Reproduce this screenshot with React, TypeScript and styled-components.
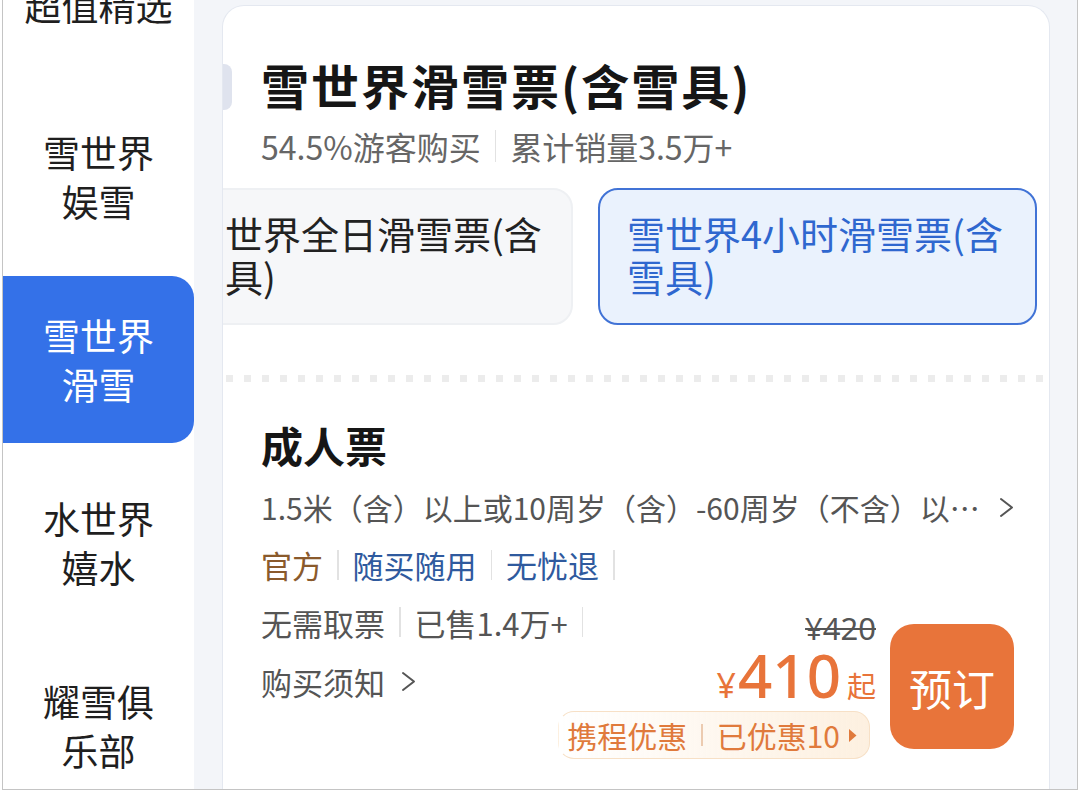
import React from 'react'
import styled, { createGlobalStyle } from 'styled-components'

const GlobalStyle = createGlobalStyle`
  html, body {
    margin: 0;
    padding: 0;
    background: #fff;
  }
  body {
    font-family: "Noto Sans CJK SC", "Noto Sans", sans-serif;
    color: #222;
  }
  * {
    box-sizing: border-box;
  }
`

const Screen = styled.div`
  display: flex;
  width: 1076px;
  height: 790px;
  margin-left: 2px;
  border: 1px solid #c4c4c4;
  border-top: none;
  background: #f3f5f9;
  overflow: hidden;
`

const Sidebar = styled.nav`
  width: 191px;
  flex-shrink: 0;
  background: #fff;
  overflow: hidden;
`

const SideList = styled.ul`
  list-style: none;
  margin: 0;
  padding: 0 0 60px;
  display: flex;
  flex-direction: column;
  gap: 16px;
`

const SideItem = styled.li<{ $active?: boolean; $compact?: boolean }>`
  height: ${(p) => (p.$compact ? 143 : 167)}px;
  flex-shrink: 0;
  display: flex;
  flex-direction: column;
  align-items: center;
  justify-content: center;
  font-size: 37px;
  line-height: 49px;
  color: ${(p) => (p.$active ? '#fff' : '#1f1f1f')};
  background: ${(p) => (p.$active ? '#3471e8' : 'transparent')};
  border-radius: 0 22px 22px 0;
`

const SideLine = styled.span`
  display: block;
  white-space: nowrap;
`

const Main = styled.main`
  flex: 1;
  min-width: 0;
  display: flex;
  padding: 5px 27px 0 28px;
`

const Card = styled.section`
  position: relative;
  flex: 1;
  min-width: 0;
  background: #fff;
  border: 1.5px solid #e4e8f0;
  border-bottom: none;
  border-radius: 22px 22px 0 0;
  overflow: hidden;
`

const EdgeTab = styled.div`
  position: absolute;
  left: 0;
  top: 58px;
  width: 9px;
  height: 46px;
  background: #dfe3ee;
  border-radius: 0 8px 8px 0;
`

const Header = styled.header`
  padding: 48px 38px 0;
`

const Title = styled.h1`
  margin: 0;
  font-size: 48px;
  line-height: 60px;
  font-weight: 700;
  color: #161616;
  letter-spacing: 2px;
`

const Stats = styled.div`
  display: flex;
  align-items: center;
  margin-top: 12px;
  font-size: 32px;
  line-height: 40px;
  color: #666;
`

const Divider = styled.span<{ $color?: string; $h?: number }>`
  display: inline-block;
  flex-shrink: 0;
  width: 1.5px;
  height: ${(p) => p.$h ?? 30}px;
  margin: 0 14px;
  background: ${(p) => p.$color ?? '#e2e2e2'};
`

const Strip = styled.div`
  margin-top: 22px;
  overflow: hidden;
`

const Track = styled.div`
  display: flex;
  gap: 25px;
  width: max-content;
  padding: 0 16px 0 16px;
`

const Tab = styled.div<{ $active?: boolean; $width: number }>`
  width: ${(p) => p.$width}px;
  height: 137px;
  padding: 21px 16px 0 27px;
  border: 2px solid ${(p) => (p.$active ? '#4173d6' : '#eef0f3')};
  border-radius: 20px;
  background: ${(p) => (p.$active ? '#eaf2fd' : '#f6f7f9')};
  color: ${(p) => (p.$active ? '#2f67cf' : '#222')};
  font-size: 38px;
  line-height: 43px;
`

const Dots = styled.div`
  height: 7px;
  margin: 50px 0 0 3px;
  background-image: linear-gradient(to right, #ececec 7px, transparent 7px);
  background-size: 18px 7px;
  background-repeat: repeat-x;
`

const Ticket = styled.div`
  padding: 35px 35px 0 38px;
`

const TicketName = styled.h2`
  margin: 0;
  font-size: 42px;
  line-height: 56px;
  font-weight: 700;
  color: #161616;
`

const DescRow = styled.div`
  display: flex;
  align-items: center;
  margin-top: 13px;
  height: 42px;
  gap: 14px;
`

const DescText = styled.span`
  flex: 1;
  min-width: 0;
  overflow: hidden;
  white-space: nowrap;
  text-overflow: ellipsis;
  font-size: 30px;
  line-height: 42px;
  color: #555;
`

const TagRow = styled.div`
  display: flex;
  align-items: center;
  margin-top: 16px;
  height: 42px;
  font-size: 31px;
`

const Tag = styled.span<{ $color: string }>`
  color: ${(p) => p.$color};
  line-height: 42px;
`

const BottomRow = styled.div`
  display: flex;
  align-items: flex-start;
  margin-top: 15px;
`

const LeftCol = styled.div`
  display: flex;
  flex-direction: column;
  flex: 1;
  min-width: 0;
  gap: 17px;
`

const InfoRow = styled.div`
  display: flex;
  align-items: center;
  height: 42px;
  font-size: 31px;
  color: #555;
  white-space: nowrap;
`

const Notice = styled.div`
  display: flex;
  align-items: center;
  gap: 16px;
  height: 42px;
  font-size: 31px;
  color: #555;
  white-space: nowrap;
`

const RightGroup = styled.div`
  display: flex;
  flex-shrink: 0;
  align-items: flex-start;
  gap: 14px;
`

const PriceCol = styled.div`
  display: flex;
  flex-direction: column;
  align-items: flex-end;
  margin-top: 9px;
`

const OldPrice = styled.span`
  font-family: "Noto Sans", sans-serif;
  font-size: 31px;
  line-height: 36px;
  color: #555;
  text-decoration: line-through;
  text-decoration-thickness: 2px;
`

const NowPrice = styled.div`
  display: flex;
  align-items: baseline;
  color: #e8743a;
  line-height: 58px;
  height: 58px;
`

const Yen = styled.span`
  font-family: "Noto Sans", sans-serif;
  font-size: 34px;
  margin-right: 2px;
`

const Amount = styled.span`
  font-family: "Noto Sans", sans-serif;
  font-size: 60px;
  font-weight: 500;
`

const From = styled.span`
  font-size: 29px;
  margin-left: 6px;
`

const Promo = styled.div`
  display: flex;
  align-items: center;
  height: 48px;
  margin: 7px 6px 0 0;
  padding: 0 12px 0 8px;
  border: 1.5px solid #f7e0c6;
  border-left-color: transparent;
  border-radius: 16px;
  background: linear-gradient(to right, rgba(255, 246, 236, 0), #fdf0e0);
  font-size: 30px;
  color: #e07a3c;
  white-space: nowrap;
`

const BookButton = styled.button`
  width: 124px;
  height: 125px;
  flex-shrink: 0;
  margin-top: 23px;
  border: none;
  border-radius: 24px;
  background: #e8743a;
  color: #fff;
  font-family: "Noto Sans CJK SC", sans-serif;
  font-size: 43px;
  cursor: pointer;
`

const Chevron = () => (
  <svg width="15" height="21" viewBox="0 0 15 21" fill="none" style={{ flexShrink: 0 }}>
    <path d="M2 2 L13 10.5 L2 19" stroke="#555" strokeWidth="2" strokeLinecap="round" strokeLinejoin="round" />
  </svg>
)

const Caret = () => (
  <svg width="9" height="15" viewBox="0 0 9 15" style={{ marginLeft: 8 }}>
    <path d="M1 1 L8.5 7.5 L1 14 Z" fill="#e07a3c" />
  </svg>
)

const sideItems = [
  { lines: ['超值精选'], compact: true },
  { lines: ['雪世界', '娱雪'] },
  { lines: ['雪世界', '滑雪'], active: true },
  { lines: ['水世界', '嬉水'] },
  { lines: ['耀雪俱', '乐部'] },
  { lines: ['周边', '酒店'] },
]

const tabs = [
  { name: '雪世界全日滑雪票(含雪具)', width: 415 },
  { name: '雪世界4小时滑雪票(含雪具)', width: 439, active: true },
]

const tags = [
  { text: '官方', color: '#8a5a2c' },
  { text: '随买随用', color: '#2f5a9e' },
  { text: '无忧退', color: '#2f5a9e' },
]

const App = (): JSX.Element => {
  return (
    <>
      <GlobalStyle />
      <Screen>
        <Sidebar ref={(el) => { if (el) el.scrollTop = 66 }}>
          <SideList>
            {sideItems.map((item, i) => (
              <SideItem key={i} $active={item.active} $compact={item.compact}>
                {item.lines.map((line) => (
                  <SideLine key={line}>{line}</SideLine>
                ))}
              </SideItem>
            ))}
          </SideList>
        </Sidebar>
        <Main>
          <Card>
            <EdgeTab />
            <Header>
              <Title>雪世界滑雪票(含雪具)</Title>
              <Stats>
                54.5%游客购买
                <Divider $h={32} />
                累计销量3.5万+
              </Stats>
            </Header>
            <Strip ref={(el) => { if (el) el.scrollLeft = 81 }}>
              <Track>
                {tabs.map((tab) => (
                  <Tab key={tab.name} $active={tab.active} $width={tab.width}>
                    {tab.name}
                  </Tab>
                ))}
              </Track>
            </Strip>
            <Dots />
            <Ticket>
              <TicketName>成人票</TicketName>
              <DescRow>
                <DescText>1.5米（含）以上或10周岁（含）-60周岁（不含）以上游客</DescText>
                <Chevron />
              </DescRow>
              <TagRow>
                {tags.map((tag) => (
                  <React.Fragment key={tag.text}>
                    <Tag $color={tag.color}>{tag.text}</Tag>
                    <Divider />
                  </React.Fragment>
                ))}
              </TagRow>
              <BottomRow>
                <LeftCol>
                  <InfoRow>
                    无需取票
                    <Divider />
                    已售1.4万+
                    <Divider />
                  </InfoRow>
                  <Notice>
                    购买须知
                    <Chevron />
                  </Notice>
                </LeftCol>
                <RightGroup>
                  <PriceCol>
                    <OldPrice>¥420</OldPrice>
                    <NowPrice>
                      <Yen>¥</Yen>
                      <Amount>410</Amount>
                      <From>起</From>
                    </NowPrice>
                    <Promo>
                      携程优惠
                      <Divider $color="#eccbb0" $h={22} />
                      已优惠10
                      <Caret />
                    </Promo>
                  </PriceCol>
                  <BookButton>预订</BookButton>
                </RightGroup>
              </BottomRow>
            </Ticket>
          </Card>
        </Main>
      </Screen>
    </>
  )
}

export default App
